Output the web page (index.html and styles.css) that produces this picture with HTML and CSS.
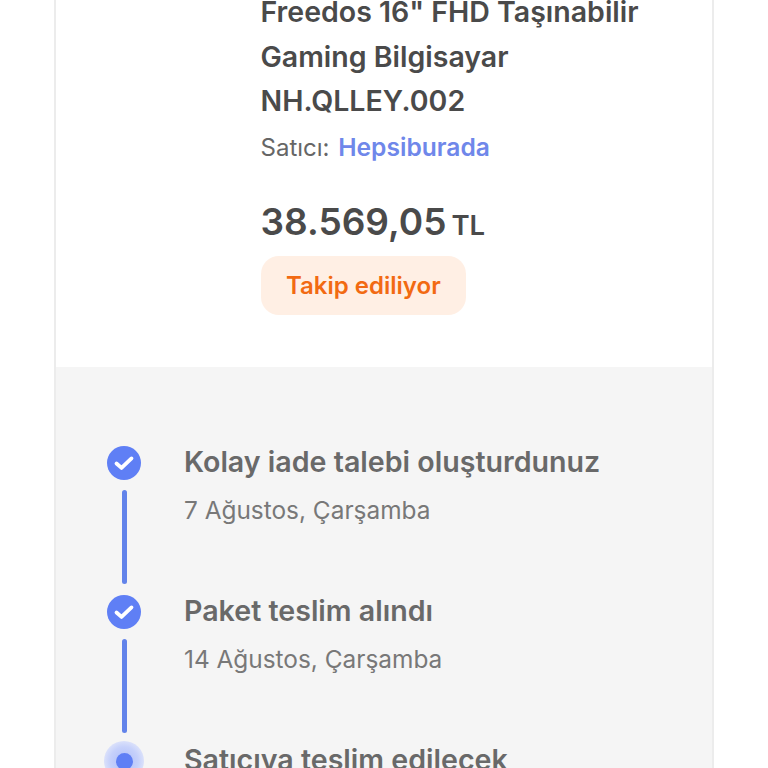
FILE: index.html
```html
<!DOCTYPE html>
<html lang="tr">
<head>
<meta charset="utf-8">
<title>Takip</title>
<link rel="stylesheet" href="styles.css">
</head>
<body>
<main class="card">
  <section class="product">
    <h1 class="title">Freedos 16" FHD Taşınabilir Gaming Bilgisayar NH.QLLEY.002</h1>
    <p class="seller">Satıcı: <a class="seller-link">Hepsiburada</a></p>
    <p class="price">38.569,05<span class="currency">TL</span></p>
    <span class="badge">Takip ediliyor</span>
  </section>
  <section class="timeline">
    <div class="step">
      <div class="rail">
        <svg class="check" viewBox="0 0 34 34"><circle cx="17" cy="17" r="17" fill="#5f7ff5"/><path d="M9.5 17.5l5 4.4L24.5 12.4" fill="none" stroke="#fff" stroke-width="3.8" stroke-linecap="round" stroke-linejoin="round"/></svg>
        <div class="line"></div>
      </div>
      <div class="body">
        <h2 class="step-title">Kolay iade talebi oluşturdunuz</h2>
        <p class="step-date">7 Ağustos, Çarşamba</p>
      </div>
    </div>
    <div class="step">
      <div class="rail">
        <svg class="check" viewBox="0 0 34 34"><circle cx="17" cy="17" r="17" fill="#5f7ff5"/><path d="M9.5 17.5l5 4.4L24.5 12.4" fill="none" stroke="#fff" stroke-width="3.8" stroke-linecap="round" stroke-linejoin="round"/></svg>
        <div class="line"></div>
      </div>
      <div class="body">
        <h2 class="step-title">Paket teslim alındı</h2>
        <p class="step-date">14 Ağustos, Çarşamba</p>
      </div>
    </div>
    <div class="step">
      <div class="rail">
        <div class="pulse"><div class="dot"></div></div>
      </div>
      <div class="body">
        <h2 class="step-title">Satıcıya teslim edilecek</h2>
      </div>
    </div>
  </section>
</main>
</body>
</html>
```
FILE: styles.css
```css
html, body {
  margin: 0;
  height: 768px;
  overflow: hidden;
  background: #fff;
}
body {
  font-family: Inter, "Liberation Sans", sans-serif;
}
.card {
  width: 656px;
  margin: -10px 0 0 54px;
  border-left: 2px solid #ececec;
  border-right: 2px solid #ececec;
}
.product {
  height: 377px;
  box-sizing: border-box;
  padding: 0 30px 0 204.5px;
}
.title {
  margin: 0;
  font-size: 28.5px;
  line-height: 44.5px;
  font-weight: 600;
  color: #4a4a4a;
}
.seller {
  margin: 5px 0 0;
  font-size: 24px;
  line-height: 36px;
  color: #666;
}
.seller-link {
  margin-left: 2px;
  font-size: 24.6px;
  font-weight: 600;
  color: #6f87ea;
}
.price {
  margin: 33px 0 0;
  font-size: 37px;
  line-height: 46px;
  font-weight: 600;
  color: #4a4a4a;
}
.currency {
  margin-left: 5px;
  font-size: 27.5px;
  font-weight: 600;
}
.badge {
  display: inline-block;
  margin-top: 8px;
  padding: 0 25.5px;
  height: 59px;
  line-height: 59px;
  border-radius: 18px;
  background: #ffefe4;
  color: #f26a12;
  font-size: 24px;
  font-weight: 600;
}
.timeline {
  background: #f5f5f5;
  padding: 79px 51px 0;
  height: 400px;
}
.step {
  display: flex;
  gap: 43px;
  height: 149px;
}
.rail {
  width: 34px;
  flex: none;
  display: flex;
  flex-direction: column;
  align-items: center;
}
.check {
  width: 34px;
  height: 34px;
  display: block;
}
.line {
  width: 5px;
  height: 94px;
  margin-top: 10px;
  border-radius: 3px;
  background: #6283ea;
}
.pulse {
  width: 40px;
  height: 40px;
  margin-top: -3px;
  flex: none;
  border-radius: 50%;
  background: radial-gradient(circle, #aebdf9 0%, #c6d1fb 50%, #e4e8fa 80%, #f5f5f5 100%);
  display: flex;
  align-items: center;
  justify-content: center;
}
.dot {
  width: 17px;
  height: 17px;
  border-radius: 50%;
  background: #5f7ff5;
}
.body {
  margin-top: -4px;
}
.step-title {
  margin: 0;
  font-size: 28.6px;
  line-height: 40px;
  font-weight: 600;
  color: #696969;
}
.step-date {
  margin: 10px 0 0;
  font-size: 24.4px;
  line-height: 36px;
  color: #787878;
}
```
